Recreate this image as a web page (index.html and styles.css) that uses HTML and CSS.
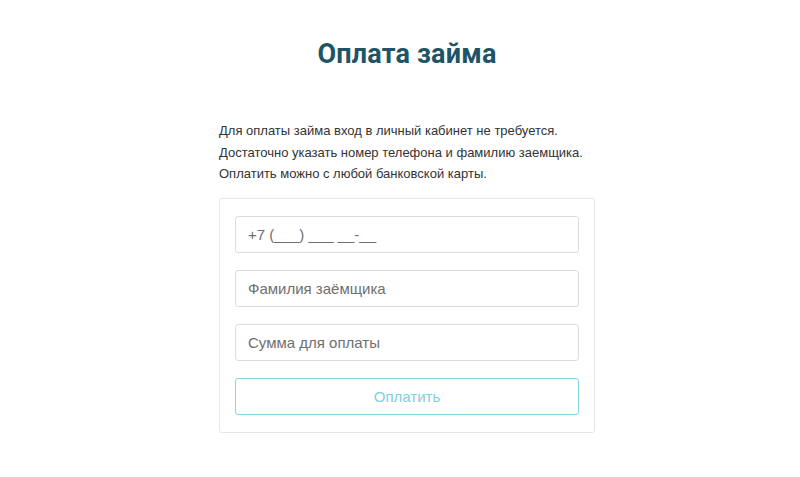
FILE: index.html
```html
<!DOCTYPE html>
<html lang="ru">
<head>
<meta charset="utf-8">
<title>Оплата займа</title>
<link rel="stylesheet" href="styles.css">
</head>
<body>
<main class="page">
  <h1 class="title">Оплата займа</h1>
  <section class="content">
    <p class="intro">Для оплаты займа вход в личный кабинет не требуется.<br>Достаточно указать номер телефона и фамилию заемщика.<br>Оплатить можно с любой банковской карты.</p>
    <form class="card">
      <input class="field" type="text" placeholder="+7 (___) ___ __-__">
      <input class="field" type="text" placeholder="Фамилия заёмщика">
      <input class="field" type="text" placeholder="Сумма для оплаты">
      <button class="btn" type="button">Оплатить</button>
    </form>
  </section>
</main>
</body>
</html>
```
FILE: styles.css
```css
html, body {
  margin: 0;
  padding: 0;
  background: #ffffff;
}
body {
  font-family: "Liberation Sans", sans-serif;
  color: #333333;
}
.page {
  display: flex;
  flex-direction: column;
  align-items: center;
  padding-left: 14px;
  padding-top: 34px;
}
.title {
  margin: 0;
  font-family: Roboto, "Liberation Sans", sans-serif;
  font-size: 27px;
  font-weight: 700;
  color: #1e5466;
  line-height: 40px;
  letter-spacing: 0.2px;
}
.content {
  width: 376px;
  margin-top: 46px;
}
.intro {
  margin: 0 0 13px 0;
  font-size: 13px;
  line-height: 21.5px;
  color: #333333;
}
.card {
  display: flex;
  flex-direction: column;
  gap: 17px;
  padding: 17px 15px;
  border: 1px solid #e6e6e6;
  border-radius: 3px;
}
.field {
  box-sizing: border-box;
  height: 37px;
  margin: 0;
  padding: 0 12px;
  border: 1px solid #d9dde2;
  border-radius: 3px;
  font-family: "Liberation Sans", sans-serif;
  font-size: 15px;
  color: #555;
  outline: none;
}
.field::placeholder {
  color: #6f6f6f;
}
.btn {
  box-sizing: border-box;
  height: 37px;
  margin: 0;
  border: 1px solid #84d5e3;
  border-radius: 3px;
  background: #ffffff;
  font-family: "Liberation Sans", sans-serif;
  font-size: 15px;
  color: #7fcfdd;
}
```
